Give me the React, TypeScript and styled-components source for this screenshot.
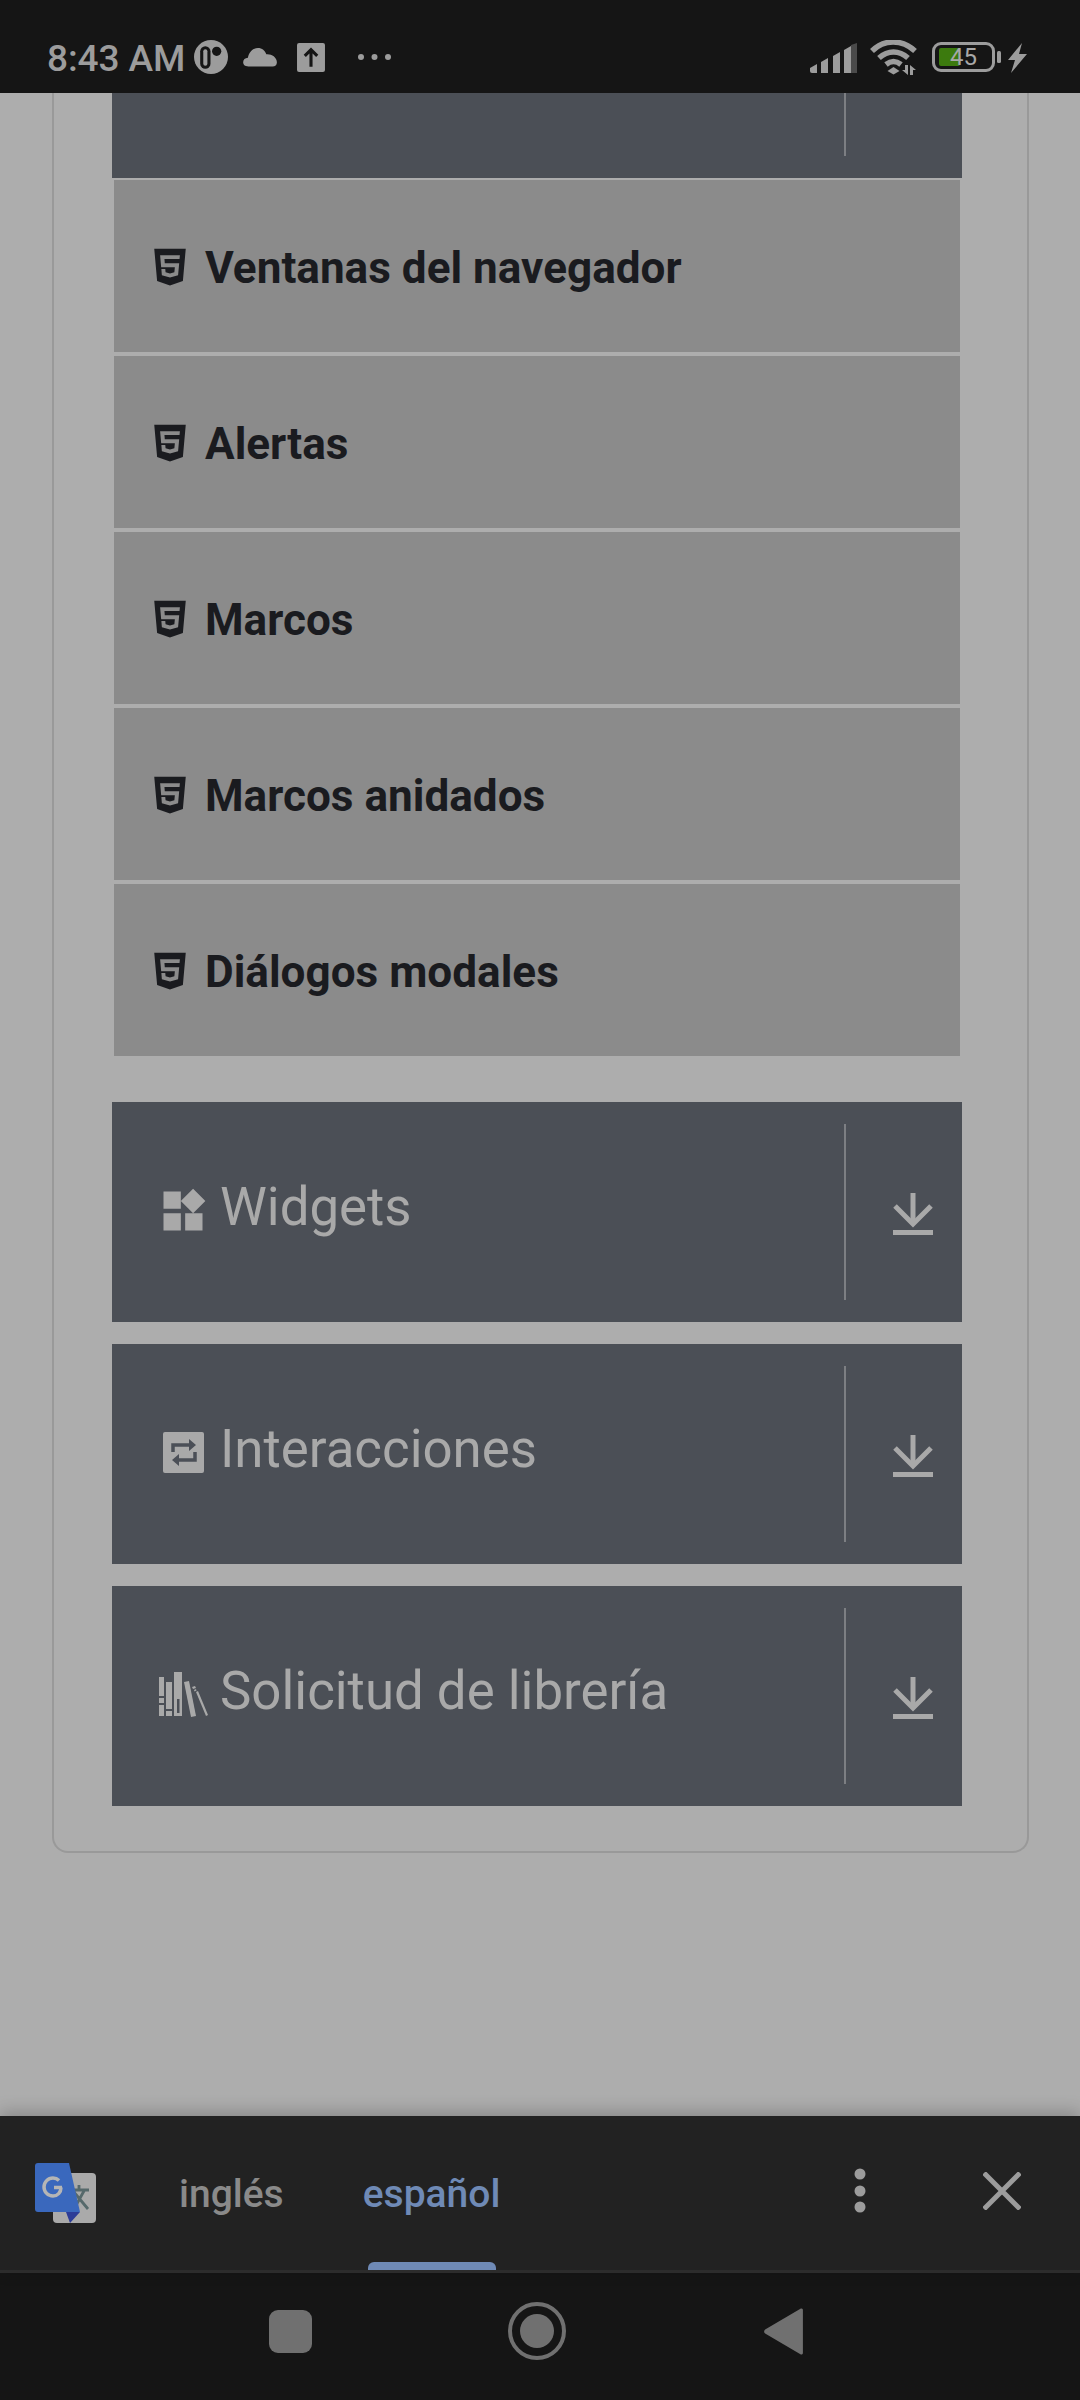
import React from 'react';
import styled, { createGlobalStyle } from 'styled-components';
import { FaHtml5 } from 'react-icons/fa';
import { MdWidgets } from 'react-icons/md';

const SUB_ITEMS = [
  'Ventanas del navegador',
  'Alertas',
  'Marcos',
  'Marcos anidados',
  'Diálogos modales',
];

const GlobalStyle = createGlobalStyle`
  html, body {
    margin: 0;
    padding: 0;
    background: #adadad;
    font-family: Roboto, "Noto Sans", sans-serif;
  }
`;

const Screen = styled.div`
  width: 1080px;
  height: 2400px;
  display: flex;
  flex-direction: column;
  overflow: hidden;
  background: #adadad;
`;

const StatusBar = styled.div`
  height: 93px;
  flex: none;
  display: flex;
  align-items: flex-start;
  justify-content: space-between;
  padding: 40px 53px 0 47px;
  box-sizing: border-box;
  background: #151515;
  color: #9c9c9c;
`;

const StatusGroup = styled.div`
  display: flex;
  align-items: flex-start;
`;

const Clock = styled.span`
  font-size: 37px;
  line-height: 37px;
  font-weight: 500;
  margin-right: 9px;
  letter-spacing: -0.1px;
`;

const StatusIcon = styled.svg<{ $left?: number; $top?: number }>`
  display: block;
  flex: none;
  margin-left: ${(p) => p.$left ?? 0}px;
  margin-top: ${(p) => p.$top ?? 0}px;
`;

const Battery = styled.div`
  position: relative;
  width: 63px;
  height: 30px;
  margin: 2px 0 0 15px;
  box-sizing: border-box;
  border: 3px solid #9c9c9c;
  border-radius: 9px;
  display: flex;
  align-items: center;
  justify-content: center;
  font-size: 24px;
  color: #a8a8a8;
`;

const BatteryFill = styled.div`
  position: absolute;
  left: 4px;
  top: 3px;
  bottom: 3px;
  width: 21px;
  background: #3c7a0e;
  border-radius: 2px;
`;

const BatteryText = styled.span`
  position: relative;
`;

const Main = styled.main`
  flex: 1;
  min-height: 0;
`;

const Card = styled.section`
  margin: 0 51px 0 52px;
  padding: 0 65px 45px 58px;
  border: 2px solid #999999;
  border-top: 0;
  border-radius: 0 0 16px 16px;
`;

const DarkButton = styled.div<{ $cut?: boolean }>`
  height: ${(p) => (p.$cut ? 85 : 220)}px;
  padding: ${(p) => (p.$cut ? '0 0 22px' : '22px 0')};
  box-sizing: border-box;
  display: flex;
  background: #4b4f56;
  color: #a9a9a9;
`;

const ButtonLabel = styled.div`
  flex: 1;
  display: flex;
  align-items: center;
  padding: 0 0 11px 46px;
  font-size: 52.8px;
  line-height: 64px;
`;

const LabelIcon = styled.div`
  width: 50px;
  margin-right: 12px;
  display: flex;
  justify-content: center;
  align-items: center;
  padding-top: 8px;

  svg {
    flex: none;
  }
`;

const Divider = styled.div`
  width: 2px;
  background: #7d7f83;
`;

const DownloadSlot = styled.div`
  width: 116px;
  flex: none;
  display: flex;
  align-items: center;
  justify-content: center;
  padding: 4px 0 0 18px;
  box-sizing: border-box;
`;

const SubList = styled.div`
  margin: 2px 2px 46px;
  display: flex;
  flex-direction: column;
  gap: 4px;
`;

const SubItem = styled.div`
  height: 172px;
  display: flex;
  align-items: center;
  gap: 14px;
  padding: 4px 0 0 35px;
  box-sizing: border-box;
  background: #8b8b8b;
  color: #1a1b1f;
  font-size: 44.1px;
  font-weight: 700;

  svg {
    margin-top: -3px;
  }
`;

const ButtonStack = styled.div`
  display: flex;
  flex-direction: column;
  gap: 22px;
`;

const TranslateBar = styled.div`
  position: relative;
  height: 157px;
  flex: none;
  display: flex;
  align-items: stretch;
  padding-left: 35px;
  box-sizing: border-box;
  background: #222222;
  border-bottom: 3px solid #2c2c2c;
  box-shadow: 0 -4px 16px rgba(0, 0, 0, 0.22);
`;

const TranslateLogo = styled.svg`
  margin-top: 47px;
  flex: none;
`;

const LangTab = styled.div<{ $active?: boolean }>`
  position: relative;
  margin-left: ${(p) => (p.$active ? 79 : 83)}px;
  padding-top: 53px;
  font-size: 39px;
  line-height: 50px;
  font-weight: 500;
  color: ${(p) => (p.$active ? '#6f8ab6' : '#8a8a8a')};
`;

const TabMarker = styled.div`
  position: absolute;
  left: 5px;
  right: 4px;
  bottom: 0;
  height: 8px;
  border-radius: 6px 6px 0 0;
  background: #6f8ab6;
`;

const BarActions = styled.div`
  margin-left: auto;
  display: flex;
  align-items: center;
  padding: 0 59px 4px 0;
  gap: 117px;
`;

const NavBar = styled.nav`
  height: 127px;
  flex: none;
  display: flex;
  align-items: center;
  padding: 0 0 11px 269px;
  box-sizing: border-box;
  background: #151515;
`;

const NavSquare = styled.div`
  width: 43px;
  height: 43px;
  border-radius: 9px;
  background: #707070;
`;

const NavCircle = styled.div`
  width: 58px;
  height: 58px;
  margin: 0 196px;
  box-sizing: border-box;
  border: 4px solid #707070;
  border-radius: 50%;
  display: flex;
  align-items: center;
  justify-content: center;
`;

const NavDot = styled.div`
  width: 34px;
  height: 34px;
  border-radius: 50%;
  background: #707070;
`;

const DownloadIcon = () => (
  <svg width="42" height="42" viewBox="0 0 42 42" fill="none" stroke="#a9a9a9" strokeWidth="5">
    <path d="M21 0v31" />
    <path d="M3 13l18 18 18-18" />
    <path d="M1 39.500h40" />
  </svg>
);

const InteractionIcon = () => (
  <svg width="41" height="41" viewBox="0 0 41 41">
    <rect width="41" height="41" rx="2" fill="#a9a9a9" />
    <path d="M10 20v-7h17M32 20v8H15" fill="none" stroke="#4b4f57" strokeWidth="3.500" />
    <path d="M26 7l7 6-7 6zM16 22l-7 6 7 6z" fill="#4b4f57" />
  </svg>
);

const BooksIcon = () => (
  <svg width="49" height="45" viewBox="0 0 49 45" fill="#a9a9a9">
    <path d="M0 5h5v19H0zM0 26h5v5H0zM0 33h5v11H0z" />
    <path d="M7 10h6v27H7zM7 39h6v5H7z" />
    <path fillRule="evenodd" d="M15 0h8v44h-8zM18 27v14h2.500V27z" />
    <path d="M25 10l5-1 7 35-5 1z" />
    <path d="M37 20l2-1 10 24-2 1z" />
    <path d="M33 15l3-1 1 2-3 1zM35 18l2-1 .5 1.500-2 1z" />
  </svg>
);

const LABEL_ICONS: Record<string, React.ReactNode> = {
  Widgets: <MdWidgets size={52} />,
  Interacciones: <InteractionIcon />,
  'Solicitud de librería': <BooksIcon />,
};

const App: React.FC = () => (
  <Screen>
    <GlobalStyle />
    <StatusBar>
      <StatusGroup>
        <Clock>8:43 AM</Clock>
        <StatusIcon width="34" height="34" viewBox="0 0 33 33">
          <circle cx="16.500" cy="16.500" r="16.500" fill="#9c9c9c" />
          <rect x="6" y="6" width="10" height="22" rx="5" fill="#151515" />
          <rect x="9" y="9" width="4" height="16" rx="2" fill="#9c9c9c" />
          <circle cx="22" cy="11" r="4.500" fill="#151515" />
        </StatusIcon>
        <StatusIcon width="34" height="20" viewBox="0 0 32 19" $left={15} $top={7}>
          <path
            d="M5 18.500C1.500 18.500 0 16.500 0 14.500c0-2.500 1.800-4 4.500-4.200C5.500 4.500 9.500 1 14 1c4 0 6.800 2.500 8 6 5-.5 9.500 2.500 10 7 .3 3-1.500 4.500-4 4.500z"
            fill="#9c9c9c"
          />
        </StatusIcon>
        <StatusIcon width="28" height="29" viewBox="0 0 27 28" $left={20} $top={3}>
          <rect width="27" height="28" rx="2" fill="#9c9c9c" />
          <path d="M13.500 23V7M7.500 12.500l6-6 6 6" fill="none" stroke="#151515" strokeWidth="3" />
        </StatusIcon>
        <StatusIcon width="34" height="6" viewBox="0 0 34 6" $left={33} $top={14}>
          <circle cx="3" cy="3" r="3" fill="#9c9c9c" />
          <circle cx="16.500" cy="3" r="3" fill="#9c9c9c" />
          <circle cx="30" cy="3" r="3" fill="#9c9c9c" />
        </StatusIcon>
      </StatusGroup>
      <StatusGroup>
        <StatusIcon width="47" height="30" viewBox="0 0 47 30" $top={3}>
          <path d="M0 25l7-4v9H2a2 2 0 0 1-2-2z" fill="#9c9c9c" />
          <path d="M11 19l7-4v15h-7z" fill="#9c9c9c" />
          <path d="M23 13l7-4v21h-7z" fill="#9c9c9c" />
          <path d="M34 7l7-4v27h-7z" fill="#9c9c9c" />
          <path d="M41 2l6-2v30h-6z" fill="#4a4a4a" />
        </StatusIcon>
        <StatusIcon width="47" height="36" viewBox="0 0 47 36" $left={13}>
          <path
            d="M2 11C14-1 32-1 45 11M9 18c9-8 20-8 29 0M16 24.500c5-4 10-4 15 0"
            fill="none"
            stroke="#9c9c9c"
            strokeWidth="5.500"
          />
          <path d="M23.500 27l6 4-6 3.500-6-3.500z" fill="#9c9c9c" />
          <path d="M35 25h3v10l-6-5h3zM40 35V25l6 5h-3v5z" fill="#9c9c9c" />
        </StatusIcon>
        <Battery>
          <BatteryFill />
          <BatteryText>45</BatteryText>
        </Battery>
        <StatusIcon width="4" height="12" viewBox="0 0 4 12" $left={2} $top={11}>
          <rect width="4" height="12" rx="1.500" fill="#9c9c9c" />
        </StatusIcon>
        <StatusIcon width="19" height="30" viewBox="0 0 19 30" $left={7} $top={3}>
          <path d="M14 0L0 17h7L3 30l16-19h-8z" fill="#9c9c9c" />
        </StatusIcon>
      </StatusGroup>
    </StatusBar>

    <Main>
      <Card>
        <DarkButton $cut>
          <ButtonLabel />
          <Divider />
          <DownloadSlot />
        </DarkButton>
        <SubList>
          {SUB_ITEMS.map((name) => (
            <SubItem key={name}>
              <FaHtml5 size={42} />
              <span>{name}</span>
            </SubItem>
          ))}
        </SubList>
        <ButtonStack>
          {Object.keys(LABEL_ICONS).map((name) => (
            <DarkButton key={name}>
              <ButtonLabel>
                <LabelIcon>{LABEL_ICONS[name]}</LabelIcon>
                {name}
              </ButtonLabel>
              <Divider />
              <DownloadSlot>
                <DownloadIcon />
              </DownloadSlot>
            </DarkButton>
          ))}
        </ButtonStack>
      </Card>
    </Main>

    <TranslateBar>
      <TranslateLogo width="61" height="60" viewBox="0 0 61 60">
        <rect x="18" y="10" width="43" height="50" rx="4" fill="#aaaaaa" />
        <path d="M36 27h18M44 22v5M49.500 27L39 46M38 28l15 18" fill="none" stroke="#56696b" strokeWidth="2.800" />
        <path d="M31 49h14L35 60z" fill="#2c3c97" />
        <path d="M3 0h31l11 49H3a3 3 0 0 1-3-3V3a3 3 0 0 1 3-3z" fill="#3a68bd" />
        <path
          d="M27 24.500h-8M26 24.500c0 5-3.500 8.500-8 8.500a9 9 0 0 1 0-18c2.400 0 4.500.9 6 2.400"
          fill="none"
          stroke="#b5b5b5"
          strokeWidth="3.500"
        />
      </TranslateLogo>
      <LangTab>inglés</LangTab>
      <LangTab $active>
        español
        <TabMarker />
      </LangTab>
      <BarActions>
        <svg width="12" height="46" viewBox="0 0 12 46" fill="#9c9c9c">
          <circle cx="6" cy="6" r="5.500" />
          <circle cx="6" cy="23" r="5.500" />
          <circle cx="6" cy="39" r="5.500" />
        </svg>
        <svg width="38" height="38" viewBox="0 0 38 38" stroke="#9c9c9c" strokeWidth="5">
          <path d="M1 1l36 36M37 1L1 37" />
        </svg>
      </BarActions>
    </TranslateBar>

    <NavBar>
      <NavSquare />
      <NavCircle>
        <NavDot />
      </NavCircle>
      <svg width="43" height="49" viewBox="0 0 38 48">
        <path d="M36 1.500a1.500 1.500 0 0 1 2 1.500v42a1.500 1.500 0 0 1-2 1.500L1 26a2.500 2.500 0 0 1 0-4z" fill="#707070" />
      </svg>
    </NavBar>
  </Screen>
);

export default App;
